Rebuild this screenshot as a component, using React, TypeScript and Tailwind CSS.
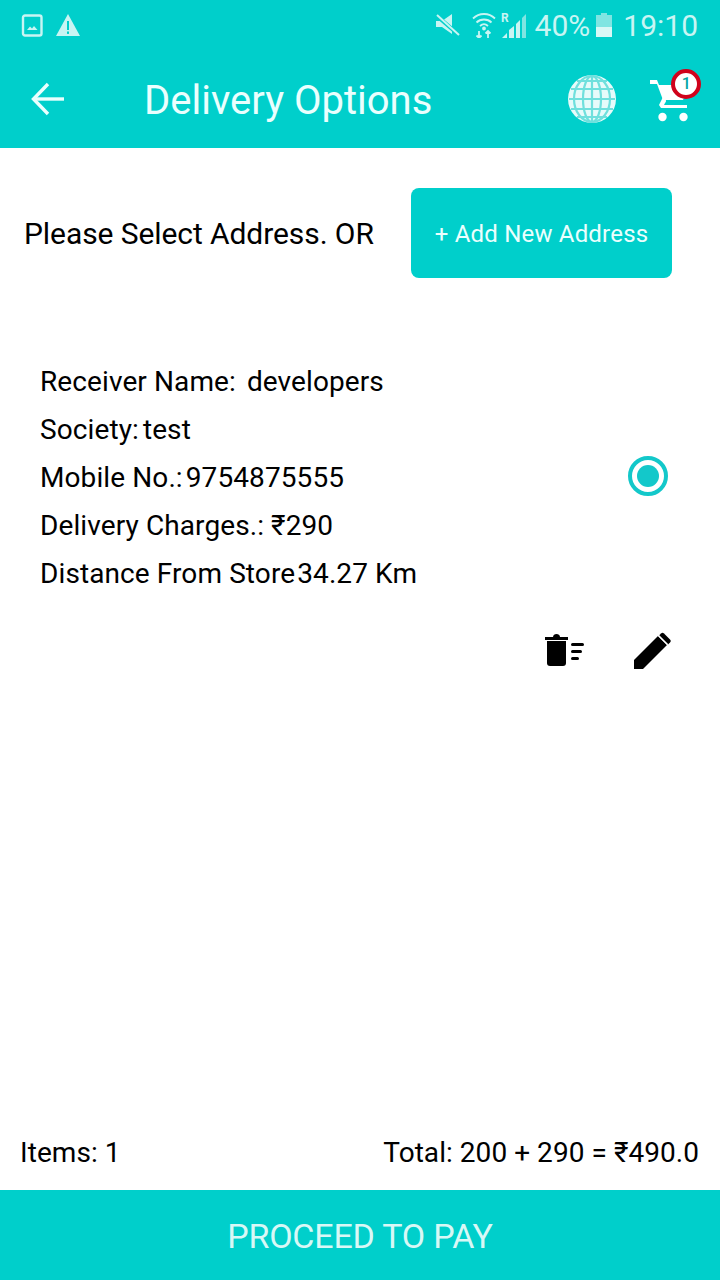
const teal = 'bg-[#00cfcb]';

function GalleryIcon() {
  return (
    <svg width="24" height="24" viewBox="0 0 24 24" fill="none">
      <rect x="3" y="2.5" width="18.5" height="20" rx="2" stroke="#c8f5f3" strokeWidth="2.4" />
      <path d="M7 17l3-3.5 2 2 2-2.5 3.5 4z" fill="#c8f5f3" />
    </svg>
  );
}

function WarningIcon() {
  return (
    <svg width="26" height="24" viewBox="0 0 26 24">
      <path d="M13 1L25 23H1z" fill="#c8f5f3" />
      <rect x="12" y="8" width="2" height="9" fill="#00cfcb" />
      <rect x="12" y="18.5" width="2" height="2.4" fill="#00cfcb" />
    </svg>
  );
}

function MuteIcon() {
  return (
    <svg width="26" height="26" viewBox="0 0 26 26">
      <path d="M1 9h6l10-7v20L7 15H1z" fill="#c8f5f3" />
      <path d="M2 4l22 19" stroke="#00cfcb" strokeWidth="4" />
      <path d="M2 3l22 20" stroke="#c8f5f3" strokeWidth="2" />
    </svg>
  );
}

function WifiIcon() {
  return (
    <svg width="24" height="26" viewBox="0 0 24 26" fill="none" stroke="#c8f5f3" strokeWidth="1.8">
      <path d="M1 6.5c6-6 16-6 22 0" />
      <path d="M4.5 10.5c4-4 11-4 15 0" />
      <path d="M8 14c2.4-2.2 5.6-2.2 8 0" />
      <circle cx="12" cy="16.5" r="1" fill="#c8f5f3" />
      <path d="M7 19v7M4.5 23.5L7 26l2.5-2.5M16 26v-7M13.5 21.5L16 19l2.5 2.5" />
    </svg>
  );
}

function SignalIcon() {
  return (
    <svg width="26" height="28" viewBox="0 0 26 28">
      <text x="0" y="11" fontSize="12" fontWeight="700" fill="#c8f5f3" fontFamily="Roboto, sans-serif">R</text>
      <path d="M1 27l5-5v5z" fill="#c8f5f3" />
      <path d="M8 27v-8l5-4v12z" fill="#c8f5f3" />
      <path d="M15 27V13l4-4v18z" fill="#c8f5f3" />
      <path d="M21 27V7l4-4v24z" fill="#7fe5e2" />
    </svg>
  );
}

function BatteryIcon() {
  return (
    <svg width="16" height="24" viewBox="0 0 16 24">
      <rect x="5" y="0" width="6" height="3" fill="#7fe5e2" />
      <rect x="0" y="2" width="16" height="12" fill="#7fe5e2" />
      <rect x="0" y="14" width="16" height="10" fill="#d8f8f6" />
    </svg>
  );
}

function BackIcon() {
  return (
    <svg width="36" height="36" viewBox="0 0 36 36" fill="none" stroke="#eafffe" strokeWidth="3.4">
      <path d="M34 18H4" />
      <path d="M18 3L3.5 18 18 33" />
    </svg>
  );
}

function GlobeIcon() {
  return (
    <svg width="50" height="50" viewBox="0 0 50 50">
      <circle cx="25" cy="25" r="24" fill="#e6fbfa" />
      <g fill="none" stroke="#6fe0dd" strokeWidth="2.2">
        <ellipse cx="25" cy="25" rx="9" ry="23" />
        <ellipse cx="25" cy="25" rx="18" ry="23" />
        <path d="M25 2v46M2 25h46M4 15h42M4 35h42M10 7h30M10 43h30" />
      </g>
    </svg>
  );
}

function CartIcon() {
  return (
    <svg width="46" height="46" viewBox="0 0 46 46">
      <path d="M1 2h7l2 5h30l-6 15H17l-1 3h-1l-1-3L8 6H1z" fill="#fff" />
      <path d="M14 19l-4 8 2 3h26v-3H15l2-4z" fill="#fff" />
      <circle cx="13.5" cy="39" r="4.2" fill="#fff" />
      <circle cx="34.5" cy="39" r="4.2" fill="#fff" />
    </svg>
  );
}

function TrashListIcon() {
  return (
    <svg width="42" height="36" viewBox="0 0 42 36">
      <path d="M1 5h23v3H1z" fill="#000" />
      <path d="M9 5c0-4 7-4 7 0z" fill="#000" />
      <path d="M3 9h19v22c0 2-1 3-3 3H6c-2 0-3-1-3-3z" fill="#000" />
      <rect x="27" y="11" width="13" height="3" rx="1.5" fill="#000" />
      <rect x="27" y="18" width="11" height="3" rx="1.5" fill="#000" />
      <rect x="27" y="25" width="8" height="3" rx="1.5" fill="#000" />
    </svg>
  );
}

function PencilIcon() {
  return (
    <svg width="38" height="38" viewBox="0 0 38 38">
      <path d="M0 29L24 5l9 9-24 24H0z" fill="#000" />
      <path d="M27 2.5c1-1 2-1 3 0l6 6c1 1 1 2 0 3l-2 2-9-9z" fill="#000" />
      <path d="M24.5 4.5l9 9" stroke="#fff" strokeWidth="1.5" />
    </svg>
  );
}

function Row({ label, value, gap }: { label: string; value: string; gap: string }) {
  return (
    <div className={`flex h-12 items-center ${gap}`}>
      <span>{label}</span>
      <span>{value}</span>
    </div>
  );
}

export default function App() {
  return (
    <div className="flex h-[1280px] w-[720px] flex-col bg-white font-['Roboto',sans-serif] text-[28px] text-black">
      <header className={`${teal} h-[148px] shrink-0`}>
        <div className="flex h-[50px] items-center pl-5 pr-[22px]">
          <GalleryIcon />
          <div className="ml-[11px]">
            <WarningIcon />
          </div>
          <div className="ml-auto flex items-center text-[#c8f5f3]">
            <MuteIcon />
            <div className="ml-[11px]">
              <WifiIcon />
            </div>
            <div className="ml-[5px]">
              <SignalIcon />
            </div>
            <span className="ml-[8px] text-[30px]">40%</span>
            <div className="ml-[6px]">
              <BatteryIcon />
            </div>
            <span className="ml-[11px] text-[30px]">19:10</span>
          </div>
        </div>
        <div className="flex h-[98px] items-center pl-[30px]">
          <BackIcon />
          <h1 className="ml-[78px] pt-1 text-[40px] font-normal text-[#eafffe]">Delivery Options</h1>
          <div className="ml-[135px]">
            <GlobeIcon />
          </div>
          <div className="relative ml-[32px] mt-[4px]">
            <CartIcon />
            <div className="absolute -right-[6px] -top-[9px] flex h-[30px] w-[30px] items-center justify-center rounded-full border-[4px] border-[#d0021b] bg-white text-[16px] font-medium text-[#00a5a3]">
              1
            </div>
          </div>
        </div>
      </header>

      <main className="flex-1">
        <div className="mt-10 flex items-center pl-6">
          <span className="w-[387px] text-[30px] tracking-[-0.08px]">Please Select Address. OR</span>
          <button className={`${teal} h-[90px] w-[261px] rounded-lg pt-[2px] text-[24px] tracking-[0.2px] text-[#eafffe]`}>
            + Add New Address
          </button>
        </div>
        <div className="mt-[80px] flex items-center pl-10 pr-[52px] tracking-[0.1px]">
          <div className="flex-1">
            <Row label="Receiver Name:" value="developers" gap="gap-[11px]" />
            <Row label="Society:" value="test" gap="gap-[4px]" />
            <Row label="Mobile No.:" value="9754875555" gap="gap-[3px]" />
            <Row label="Delivery Charges.:" value="₹290" gap="gap-[7px]" />
            <Row label="Distance From Store" value="34.27 Km" gap="gap-[2px]" />
          </div>
          <div className="mb-1 flex h-10 w-10 items-center justify-center rounded-full border-[4px] border-[#13c8ca]">
            <div className="h-[22px] w-[22px] rounded-full bg-[#13c8ca]" />
          </div>
        </div>
        <div className="mt-[33px] flex items-center justify-end pr-[48px]">
          <TrashListIcon />
          <div className="ml-[48px]">
            <PencilIcon />
          </div>
        </div>
      </main>

      <div className="flex h-[76px] shrink-0 items-center justify-between pl-5 pr-[21px] pt-[2px] tracking-[0.05px]">
        <span>Items: 1</span>
        <span>Total: 200 + 290 = ₹490.0</span>
      </div>
      <button className={`${teal} h-[90px] shrink-0 pt-[2px] text-[34px] tracking-[-0.2px] text-[#d8f8f6]`}>PROCEED TO PAY</button>
    </div>
  );
}
